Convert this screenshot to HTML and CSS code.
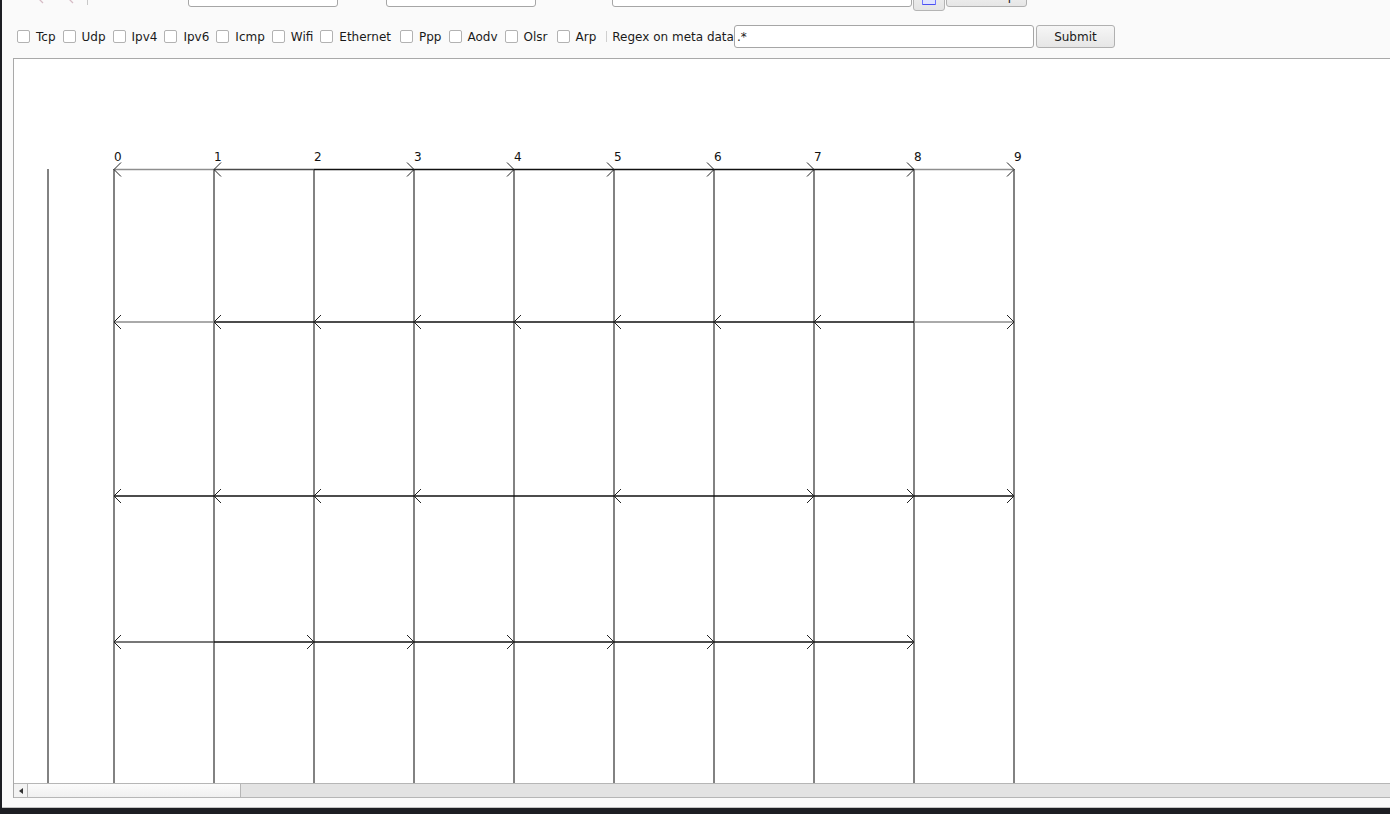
FILE: index.html
```html
<!DOCTYPE html>
<html>
<head>
<meta charset="utf-8">
<title>Sequence viewer</title>
<link rel="stylesheet" href="styles.css">
</head>
<body>
<div class="window">
  <div class="top-row">
    <span class="nav-icon first"><svg width="12" height="20" viewBox="0 0 12 20"><path d="M10 2 L2 10 L10 18" fill="none" stroke="#d6bcc6" stroke-width="1.3"/></svg></span>
    <span class="nav-icon second"><svg width="12" height="20" viewBox="0 0 12 20"><path d="M10 2 L2 10 L10 18" fill="none" stroke="#d6bcc6" stroke-width="1.3"/></svg></span>
    <span class="vsep"></span>
    <input class="field field-from" type="text">
    <input class="field field-to" type="text">
    <input class="field field-filter" type="text">
    <button class="icon-btn" type="button"><svg width="16" height="14" viewBox="0 0 16 14"><rect x="1.5" y="2.5" width="13" height="9" fill="#dfe3ff" stroke="#6f74ff"/><line x1="2" y1="11.5" x2="14" y2="11.5" stroke="#4b50f0"/></svg></button>
    <button class="btn btn-step" type="button">Next step</button>
  </div>

  <div class="filter-row">
    <label class="opt"><input type="checkbox"><span>Tcp</span></label>
    <label class="opt"><input type="checkbox"><span>Udp</span></label>
    <label class="opt"><input type="checkbox"><span>Ipv4</span></label>
    <label class="opt"><input type="checkbox"><span>Ipv6</span></label>
    <label class="opt"><input type="checkbox"><span>Icmp</span></label>
    <label class="opt"><input type="checkbox"><span>Wifi</span></label>
    <label class="opt"><input type="checkbox"><span class="wide">Ethernet</span></label>
    <label class="opt"><input type="checkbox"><span>Ppp</span></label>
    <label class="opt"><input type="checkbox"><span>Aodv</span></label>
    <label class="opt"><input type="checkbox"><span class="wide">Olsr</span></label>
    <label class="opt"><input type="checkbox"><span>Arp</span></label>
    <span class="sep"></span>
    <span class="regex-label">Regex on meta data</span>
    <input class="field field-regex" type="text" value=".*">
    <button class="btn btn-submit" type="button">Submit</button>
  </div>

  <div class="viewport">
    <div class="canvas">
      <svg class="diagram" width="1386" height="724" viewBox="14 59 1386 724">
        <g class="lifelines">
          <line x1="48" y1="169" x2="48" y2="800"/>
          <line x1="114" y1="169" x2="114" y2="800"/>
          <line x1="214" y1="169" x2="214" y2="800"/>
          <line x1="314" y1="169" x2="314" y2="800"/>
          <line x1="414" y1="169" x2="414" y2="800"/>
          <line x1="514" y1="169" x2="514" y2="800"/>
          <line x1="614" y1="169" x2="614" y2="800"/>
          <line x1="714" y1="169" x2="714" y2="800"/>
          <line x1="814" y1="169" x2="814" y2="800"/>
          <line x1="914" y1="169" x2="914" y2="800"/>
          <line x1="1014" y1="169" x2="1014" y2="800"/>
        </g>
        <g class="labels">
          <text x="114" y="161">0</text>
          <text x="214" y="161">1</text>
          <text x="314" y="161">2</text>
          <text x="414" y="161">3</text>
          <text x="514" y="161">4</text>
          <text x="614" y="161">5</text>
          <text x="714" y="161">6</text>
          <text x="814" y="161">7</text>
          <text x="914" y="161">8</text>
          <text x="1014" y="161">9</text>
        </g>

        <g class="msg">
          <line class="m-gray" x1="114" y1="169.5" x2="214" y2="169.5"/>
          <line class="m-dark" x1="214" y1="169.5" x2="314" y2="169.5"/>
          <line class="m-black" x1="314" y1="169.5" x2="914" y2="169.5"/>
          <line class="m-gray" x1="914" y1="169.5" x2="1014" y2="169.5"/>
          <polyline class="head" points="121,162.5 114,169.5 121,176.5"/>
          <polyline class="head" points="221,162.5 214,169.5 221,176.5"/>
          <polyline class="head" points="407,162.5 414,169.5 407,176.5"/>
          <polyline class="head" points="507,162.5 514,169.5 507,176.5"/>
          <polyline class="head" points="607,162.5 614,169.5 607,176.5"/>
          <polyline class="head" points="707,162.5 714,169.5 707,176.5"/>
          <polyline class="head" points="807,162.5 814,169.5 807,176.5"/>
          <polyline class="head" points="907,162.5 914,169.5 907,176.5"/>
          <polyline class="head" points="1007,162.5 1014,169.5 1007,176.5"/>
        </g>

        <g class="msg">
          <line class="m-gray" x1="114" y1="322" x2="214" y2="322"/>
          <line class="m-black" x1="214" y1="322" x2="914" y2="322"/>
          <line class="m-gray" x1="914" y1="322" x2="1014" y2="322"/>
          <polyline class="head" points="121,315 114,322 121,329"/>
          <polyline class="head" points="221,315 214,322 221,329"/>
          <polyline class="head" points="321,315 314,322 321,329"/>
          <polyline class="head" points="421,315 414,322 421,329"/>
          <polyline class="head" points="521,315 514,322 521,329"/>
          <polyline class="head" points="621,315 614,322 621,329"/>
          <polyline class="head" points="721,315 714,322 721,329"/>
          <polyline class="head" points="821,315 814,322 821,329"/>
          <polyline class="head" points="1007,315 1014,322 1007,329"/>
        </g>

        <g class="msg">
          <line class="m-black" x1="114" y1="496" x2="1014" y2="496"/>
          <polyline class="head" points="121,489 114,496 121,503"/>
          <polyline class="head" points="221,489 214,496 221,503"/>
          <polyline class="head" points="321,489 314,496 321,503"/>
          <polyline class="head" points="421,489 414,496 421,503"/>
          <polyline class="head" points="621,489 614,496 621,503"/>
          <polyline class="head" points="807,489 814,496 807,503"/>
          <polyline class="head" points="907,489 914,496 907,503"/>
          <polyline class="head" points="1007,489 1014,496 1007,503"/>
        </g>

        <g class="msg">
          <line class="m-dark" x1="114" y1="642" x2="214" y2="642"/>
          <line class="m-black" x1="214" y1="642" x2="914" y2="642"/>
          <polyline class="head" points="121,635 114,642 121,649"/>
          <polyline class="head" points="307,635 314,642 307,649"/>
          <polyline class="head" points="407,635 414,642 407,649"/>
          <polyline class="head" points="507,635 514,642 507,649"/>
          <polyline class="head" points="607,635 614,642 607,649"/>
          <polyline class="head" points="707,635 714,642 707,649"/>
          <polyline class="head" points="807,635 814,642 807,649"/>
          <polyline class="head" points="907,635 914,642 907,649"/>
        </g>
      </svg>
    </div>
    <div class="hscroll">
      <div class="hs-btn"><span class="hs-arrow"></span></div>
      <div class="hs-thumb"></div>
      <div class="hs-track"></div>
    </div>
  </div>
</div>
</body>
</html>
```

FILE: styles.css
```css
html, body {
  margin: 0;
  padding: 0;
}

body {
  background: #1d1e23;
  font-family: "DejaVu Sans", "Liberation Sans", sans-serif;
  font-size: 12px;
  color: #1a1a1a;
  overflow: hidden;
}

.window {
  box-sizing: border-box;
  margin-left: 2px;
  height: 808px;
  padding-left: 11px;
  background: #fafafa;
  border-bottom: 1px solid #c4c4c4;
  overflow: hidden;
}

/* first toolbar (scrolled partly out of view) */
.top-row {
  display: flex;
  align-items: flex-start;
  height: 26px;
  margin-top: -15px;
}

.nav-icon {
  display: block;
  width: 12px;
  height: 20px;
}

.nav-icon.first { margin-left: 20px; }
.nav-icon.second { margin-left: 18px; }

.vsep {
  width: 1px;
  height: 20px;
  background: #c8c8c8;
  margin-left: 12px;
}

.field {
  box-sizing: border-box;
  height: 22px;
  border: 1px solid #a6a6a6;
  border-radius: 3px;
  background: #fff;
  padding: 0 2px;
  font-family: "DejaVu Sans", "Liberation Sans", sans-serif;
  font-size: 12px;
  color: #1a1a1a;
  outline: none;
}

.field-from { width: 150px; margin-left: 100px; }
.field-to { width: 150px; margin-left: 48px; }
.field-filter { width: 300px; margin-left: 76px; }

.icon-btn {
  box-sizing: border-box;
  width: 32px;
  height: 26px;
  margin-left: 1px;
  padding: 0;
  border: 1px solid #b4b4b4;
  border-radius: 3px;
  background: linear-gradient(#f4f4f4, #e4e4e4);
  display: flex;
  align-items: flex-end;
  justify-content: center;
  padding-bottom: 3px;
}

.btn {
  box-sizing: border-box;
  height: 22px;
  border: 1px solid #b0b0b0;
  border-radius: 3px;
  background: linear-gradient(#f6f6f6, #e6e6e6);
  font-family: "DejaVu Sans", "Liberation Sans", sans-serif;
  font-size: 12px;
  color: #1a1a1a;
  padding: 0;
}

.btn-step { width: 81px; margin-left: 1px; }

/* filter toolbar */
.filter-row {
  display: flex;
  align-items: center;
  height: 23px;
  margin-top: 14px;
}

.opt {
  display: flex;
  align-items: center;
  white-space: nowrap;
}

.opt input {
  appearance: none;
  -webkit-appearance: none;
  box-sizing: border-box;
  width: 13px;
  height: 13px;
  margin: 0 6px 0 4px;
  border: 1px solid #b2b2b2;
  border-radius: 2px;
  background: #fff;
}

.opt span {
  margin-right: 3px;
}

.opt span.wide {
  margin-right: 5px;
}

.sep {
  width: 1px;
  height: 11px;
  background: #cfcfcf;
  margin-left: 7px;
}

.regex-label {
  margin-left: 5px;
  white-space: nowrap;
}

.field-regex {
  width: 300px;
  height: 23px;
  margin-left: 0;
}

.btn-submit {
  width: 79px;
  height: 23px;
  margin-left: 2px;
}

/* diagram viewport */
.viewport {
  margin-top: 10px;
  width: 1400px;
  border-top: 1px solid #a9a9a9;
  border-left: 1px solid #a9a9a9;
  background: #fff;
}

.canvas {
  height: 724px;
  overflow: hidden;
}

.diagram {
  display: block;
}

.lifelines line {
  stroke: #828282;
  stroke-width: 2;
}

.labels text {
  font-family: "DejaVu Sans", sans-serif;
  font-size: 12px;
  fill: #111;
}

.msg line {
  stroke-width: 1.3;
}

.m-gray { stroke: #8e8e8e; }
.m-dark { stroke: #4a4a4a; }
.m-black { stroke: #111; }

.head {
  fill: none;
  stroke: #222;
  stroke-width: 1;
}

/* horizontal scrollbar */
.hscroll {
  display: flex;
  height: 13px;
  border-top: 1px solid #b6b6b6;
  border-bottom: 1px solid #b6b6b6;
  background: #e3e3e3;
}

.hs-btn {
  width: 13px;
  border-right: 1px solid #b6b6b6;
  background: #f3f3f3;
  display: flex;
  align-items: center;
  justify-content: center;
}

.hs-arrow {
  width: 0;
  height: 0;
  border-top: 3px solid transparent;
  border-bottom: 3px solid transparent;
  border-right: 4px solid #333;
}

.hs-thumb {
  width: 212px;
  border-right: 1px solid #b6b6b6;
  background: linear-gradient(#fbfbfb, #f0f0f0);
}

.hs-track {
  flex: 1;
  background: #e3e3e3;
}
```
